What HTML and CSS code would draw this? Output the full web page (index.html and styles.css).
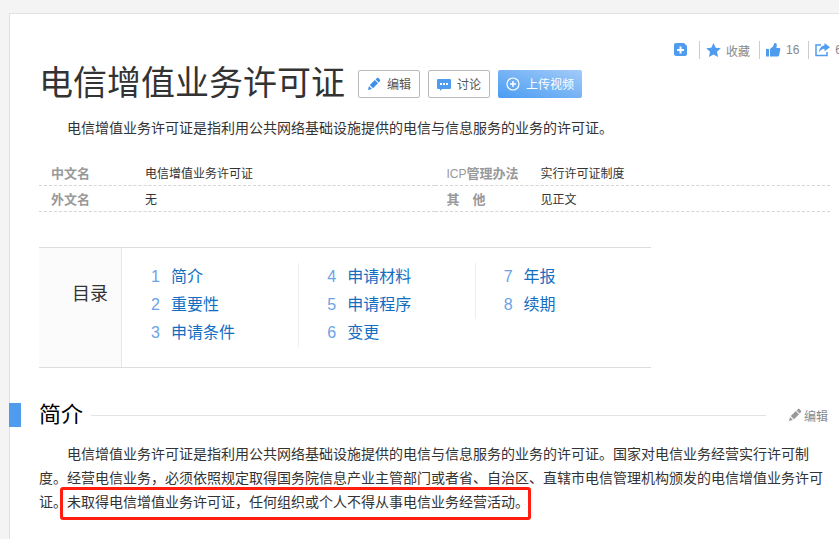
FILE: index.html
```html
<!DOCTYPE html>
<html lang="zh-CN">
<head>
  <meta charset="UTF-8">
  <meta name="viewport" content="width=device-width, initial-scale=1.0">
  <title>电信增值业务许可证</title>
  <link rel="stylesheet" href="styles.css">
</head>
<body>
  <main class="page">
    <div class="toolbar">
      <a href="#" class="tool" aria-label="添加">
        <svg width="14" height="14" viewBox="0 0 14 14"><path fill="#4f9cee" d="M2 0h8l3 3v8a2 2 0 0 1-2 2H2a2 2 0 0 1-2-2V2a2 2 0 0 1 2-2z"/><path stroke="#fff" stroke-width="2" d="M6.500 3.500v7M3 7h7"/></svg>
      </a>
      <a href="#" class="tool">
        <svg width="15" height="14" viewBox="0 0 15 14"><path fill="#4f9cee" d="M7.500 0l2.200 4.700 5.100.6-3.800 3.500 1 5.100-4.500-2.500L3 13.900l1-5.100L.2 5.300l5.100-.6z"/></svg>
        <span>收藏</span>
      </a>
      <a href="#" class="tool">
        <svg width="15" height="14" viewBox="0 0 15 14"><path fill="#4f9cee" d="M0 6h3v7.500H0zM4 6l3-2.500L8.500 0c1.800-.1 2.500 1 2.300 2.400L10.300 5H13c1 0 1.500.7 1.300 1.600l-1.200 5.600c-.2.800-.8 1.300-1.600 1.300H4z"/></svg>
        <span>16</span>
      </a>
      <a href="#" class="tool">
        <svg width="15" height="14" viewBox="0 0 15 14"><path fill="none" stroke="#4f9cee" stroke-width="1.500" d="M6 2H1v10.500h11V9"/><path fill="#4f9cee" d="M9.500 0L15 4.200 9.500 8.200V5.800C7 5.800 5.500 7 4 9.500 4.200 5.500 6 2.600 9.500 2.400z"/></svg>
        <span>6</span>
      </a>
    </div>

    <div class="title-row">
      <h1>电信增值业务许可证</h1>
      <div class="actions">
        <button type="button" class="btn">
          <svg width="14" height="14" viewBox="0 0 14 14"><path fill="#3d8fe8" d="M1 13l1-4 3 3zM2.800 8.100l5-5 3.200 3.200-5 5zM8.600 2.400L10 1c.4-.4 1-.4 1.400 0L13 2.700c.4.4.4 1 0 1.400l-1.300 1.400z"/></svg>
          编辑
        </button>
        <button type="button" class="btn">
          <svg width="14" height="14" viewBox="0 0 14 14"><path fill="#4f9cee" d="M1 2h12a1 1 0 0 1 1 1v8a1 1 0 0 1-1 1H5l-2 2v-2H1a1 1 0 0 1-1-1V3a1 1 0 0 1 1-1z"/><path fill="#fff" d="M3 6h2v2H3zM6 6h2v2H6zM9 6h2v2H9z"/></svg>
          讨论
        </button>
        <button type="button" class="btn btn-upload">
          <svg width="14" height="14" viewBox="0 0 14 14"><circle cx="7" cy="7" r="6" fill="none" stroke="#fff" stroke-width="1.200"/><path stroke="#fff" stroke-width="1.500" d="M7 4v6M4 7h6"/></svg>
          上传视频
        </button>
      </div>
    </div>

    <p class="para">电信增值业务许可证是指利用公共网络基础设施提供的电信与信息服务的业务的许可证。</p>

    <dl class="info">
      <div class="info-item"><dt>中文名</dt><dd>电信增值业务许可证</dd></div>
      <div class="info-item"><dt><span class="latin">ICP</span>管理办法</dt><dd>实行许可证制度</dd></div>
      <div class="info-item"><dt>外文名</dt><dd>无</dd></div>
      <div class="info-item"><dt>其　他</dt><dd>见正文</dd></div>
    </dl>

    <nav class="catalog">
      <h2>目录</h2>
      <div class="catalog-lists">
        <ol>
          <li><span>1</span><a href="#intro">简介</a></li>
          <li><span>2</span><a href="#">重要性</a></li>
          <li><span>3</span><a href="#">申请条件</a></li>
        </ol>
        <ol>
          <li><span>4</span><a href="#">申请材料</a></li>
          <li><span>5</span><a href="#">申请程序</a></li>
          <li><span>6</span><a href="#">变更</a></li>
        </ol>
        <ol>
          <li><span>7</span><a href="#">年报</a></li>
          <li><span>8</span><a href="#">续期</a></li>
        </ol>
      </div>
    </nav>

    <div class="section-head" id="intro">
      <h2>简介</h2>
      <a href="#" class="edit">
        <svg width="14" height="14" viewBox="0 0 14 14"><path fill="#999" d="M1 13l1-4 3 3zM2.800 8.100l5-5 3.200 3.200-5 5zM8.600 2.400L10 1c.4-.4 1-.4 1.400 0L13 2.700c.4.4.4 1 0 1.400l-1.300 1.400z"/></svg>
        编辑
      </a>
    </div>
    <p class="para">电信增值业务许可证是指利用公共网络基础设施提供的电信与信息服务的业务的许可证。国家对电信业务经营实行许可制度。经营电信业务，必须依照规定取得国务院信息产业主管部门或者省、自治区、直辖市电信管理机构颁发的电信增值业务许可证。<span class="mark">未取得电信增值业务许可证，任何组织或个人不得从事电信业务经营活动。</span></p>
  </main>
</body>
</html>
```

FILE: styles.css
```css
* {
  box-sizing: border-box;
}

body {
  margin: 0;
  overflow-x: hidden;
  background: #f4f4f4;
  color: #333;
  font-family: "Liberation Sans", "Noto Sans CJK SC", sans-serif;
  font-size: 14px;
}

h1, h2, p, dl, dd, ol {
  margin: 0;
  padding: 0;
  font-weight: normal;
}

a {
  text-decoration: none;
}

svg {
  flex: none;
}

.page {
  min-height: calc(100vh - 13px);
  margin: 13px 0 0 9px;
  padding: 27px 9px 16px 29px;
  background: #fff;
  border-top: 1px solid #e2e2e2;
  border-left: 1px solid #e2e2e2;
}

/* share tools, run past the right edge */
.toolbar {
  display: flex;
  justify-content: flex-end;
  margin-right: -12px;
}

.tool {
  display: flex;
  align-items: center;
  gap: 5px;
  height: 18px;
  padding: 0 9px 0 6px;
  color: #888;
  font-size: 12px;
  border-left: 1px solid #ccc;
}

.tool:first-child {
  padding-right: 11px;
  border-left: 0;
}

.tool:last-child {
  padding-right: 0;
}

.title-row {
  display: flex;
  align-items: center;
  gap: 13px;
  margin-bottom: 8px;
}

.title-row h1 {
  font-size: 34px;
  line-height: 49px;
}

.actions {
  display: flex;
  gap: 8px;
}

.btn {
  display: flex;
  align-items: center;
  gap: 6px;
  height: 28px;
  padding: 0 8px;
  background: #fff;
  border: 1px solid #bbb;
  border-radius: 2px;
  color: #555;
  font-family: inherit;
  font-size: 12px;
  cursor: pointer;
}

.btn-upload {
  background: linear-gradient(to top right, #4a9cf3, #a3cbf8);
  border: 0;
  color: #fff;
}

.para {
  line-height: 24px;
  text-indent: 28px;
}

.info {
  display: grid;
  grid-template-columns: 1fr 1fr;
  margin-top: 20px;
}

.info-item {
  display: flex;
  padding: 3px 0 0 12px;
  border-bottom: 1px dashed #d6d6d6;
  font-size: 12px;
  line-height: 22px;
}

.info-item dt {
  width: 94px;
  color: #999;
  font-size: 13px;
  font-weight: bold;
}

.info-item .latin {
  font-size: 12px;
  font-weight: normal;
}

.catalog {
  display: flex;
  max-width: 612px;
  margin-top: 35px;
  border-top: 1px solid #ddd;
  border-bottom: 1px solid #ddd;
}

.catalog h2 {
  width: 83px;
  padding: 34px 13px 0 0;
  background: #fbfbfb;
  border-right: 1px solid #e6e6e6;
  font-size: 18px;
  line-height: 24px;
  text-align: right;
}

.catalog-lists {
  flex: 1;
  display: grid;
  grid-template-columns: repeat(3, 1fr);
  align-items: start;
  padding: 15px 0 20px;
}

.catalog ol {
  padding-left: 28px;
  border-left: 1px solid #eee;
  list-style: none;
}

.catalog ol:first-child {
  border-color: transparent;
}

.catalog li {
  display: flex;
  gap: 11px;
  font-size: 16px;
  line-height: 28px;
}

.catalog li span {
  color: #6ba3e6;
}

.catalog li a {
  color: #136ec2;
}

.section-head {
  display: flex;
  align-items: center;
  margin: 31px 0 11px -30px;
}

.section-head::before {
  content: "";
  width: 12px;
  height: 24px;
  margin-right: 18px;
  background: #4f9cee;
}

.section-head h2 {
  color: #000;
  font-size: 22px;
  line-height: 32px;
}

.edit {
  flex: 1;
  display: flex;
  align-items: center;
  gap: 2px;
  padding-right: 2px;
  color: #888;
  font-size: 12px;
}

.edit::before {
  content: "";
  flex: 1;
  height: 1px;
  margin: 0 20px 0 8px;
  background: #e3e3e3;
}

/* red frame round the highlighted sentence */
.mark {
  position: relative;
}

.mark::after {
  content: "";
  position: absolute;
  top: -7px;
  right: -2px;
  bottom: -10px;
  left: -7px;
  border: 3px solid #ff1e10;
  border-radius: 3px;
}
```
